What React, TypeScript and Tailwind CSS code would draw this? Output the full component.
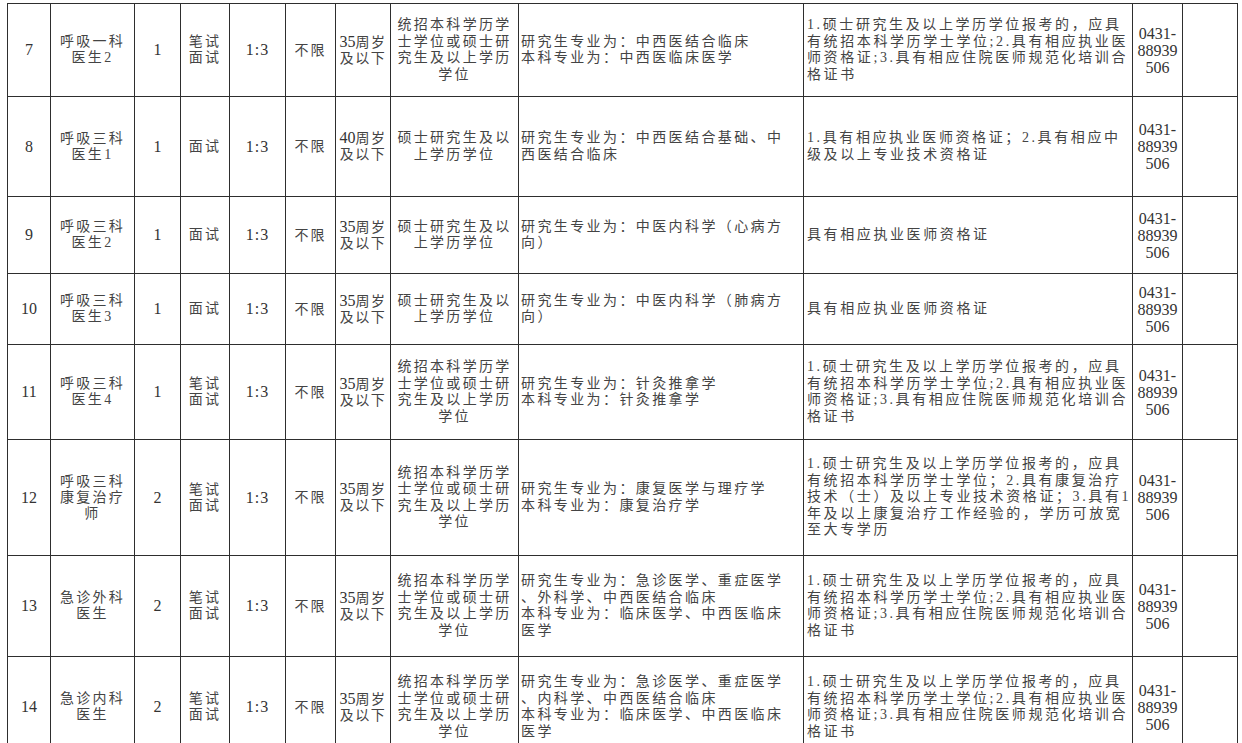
import React from 'react';

type Row = {
  no: string;
  post: string[];
  count: string;
  exam: string[];
  age: string[];
  edu: string[];
  major: string[];
  cond: string[];
  h: string;
};

const eduA = ['统招本科学历学', '士学位或硕士研', '究生及以上学历', '学位'];
const eduB = ['硕士研究生及以', '上学历学位'];
const condA = [
  '1.硕士研究生及以上学历学位报考的，应具',
  '有统招本科学历学士学位;2.具有相应执业医',
  '师资格证;3.具有相应住院医师规范化培训合',
  '格证书',
];

const rows: Row[] = [
  { no: '7', post: ['呼吸一科', '医生2'], count: '1', exam: ['笔试', '面试'], age: ['35周岁', '及以下'], edu: eduA, major: ['研究生专业为：中西医结合临床', '本科专业为：中西医临床医学'], cond: condA, h: 'h-[93px]' },
  { no: '8', post: ['呼吸三科', '医生1'], count: '1', exam: ['面试'], age: ['40周岁', '及以下'], edu: eduB, major: ['研究生专业为：中西医结合基础、中', '西医结合临床'], cond: ['1.具有相应执业医师资格证；2.具有相应中', '级及以上专业技术资格证'], h: 'h-[100px]' },
  { no: '9', post: ['呼吸三科', '医生2'], count: '1', exam: ['面试'], age: ['35周岁', '及以下'], edu: eduB, major: ['研究生专业为：中医内科学（心病方', '向）'], cond: ['具有相应执业医师资格证'], h: 'h-[77px]' },
  { no: '10', post: ['呼吸三科', '医生3'], count: '1', exam: ['面试'], age: ['35周岁', '及以下'], edu: eduB, major: ['研究生专业为：中医内科学（肺病方', '向）'], cond: ['具有相应执业医师资格证'], h: 'h-[71px]' },
  { no: '11', post: ['呼吸三科', '医生4'], count: '1', exam: ['笔试', '面试'], age: ['35周岁', '及以下'], edu: eduA, major: ['研究生专业为：针灸推拿学', '本科专业为：针灸推拿学'], cond: condA, h: 'h-[95px]' },
  { no: '12', post: ['呼吸三科', '康复治疗', '师'], count: '2', exam: ['笔试', '面试'], age: ['35周岁', '及以下'], edu: eduA, major: ['研究生专业为：康复医学与理疗学', '本科专业为：康复治疗学'], cond: ['1.硕士研究生及以上学历学位报考的，应具', '有统招本科学历学士学位；2.具有康复治疗', '技术（士）及以上专业技术资格证；3.具有1', '年及以上康复治疗工作经验的，学历可放宽', '至大专学历'], h: 'h-[116px]' },
  { no: '13', post: ['急诊外科', '医生'], count: '2', exam: ['笔试', '面试'], age: ['35周岁', '及以下'], edu: eduA, major: ['研究生专业为：急诊医学、重症医学', '、外科学、中西医结合临床', '本科专业为：临床医学、中西医临床', '医学'], cond: condA, h: 'h-[101px]' },
  { no: '14', post: ['急诊内科', '医生'], count: '2', exam: ['笔试', '面试'], age: ['35周岁', '及以下'], edu: eduA, major: ['研究生专业为：急诊医学、重症医学', '、内科学、中西医结合临床', '本科专业为：临床医学、中西医临床', '医学'], cond: condA, h: 'h-[101px]' },
];

function Lines({ lines }: { lines: string[] }) {
  return (
    <>
      {lines.map((l, i) => (
        <div key={i} className="whitespace-nowrap">{l}</div>
      ))}
    </>
  );
}

const td = 'border border-[#2e2e2e] align-middle p-0';

export default function App() {
  return (
    <div className="w-[1242px] h-[743px] overflow-hidden bg-white pt-[3px] pl-[7px] font-['Liberation_Serif','Noto_Sans_CJK_SC',serif] text-[#444444]">
      <table className="table-fixed border-collapse w-[1230px] border-t border-t-[#bdbdbd]">
        <colgroup>
          <col className="w-[43px]" />
          <col className="w-[84px]" />
          <col className="w-[46px]" />
          <col className="w-[49px]" />
          <col className="w-[56px]" />
          <col className="w-[50px]" />
          <col className="w-[55px]" />
          <col className="w-[128px]" />
          <col className="w-[285px]" />
          <col className="w-[329px]" />
          <col className="w-[50px]" />
          <col className="w-[55px]" />
        </colgroup>
        <tbody>
          {rows.map(r => (
            <tr key={r.no} className={r.h}>
              <td className={`${td} text-center text-[16px] text-[#333333]`}>{r.no}</td>
              <td className={`${td} text-center text-[14px] leading-[16px] tracking-[2.3px]`}>
                <Lines lines={r.post} />
              </td>
              <td className={`${td} text-center text-[16px] text-[#333333]`}>{r.count}</td>
              <td className={`${td} text-center text-[14px] leading-[16px] tracking-[2.3px]`}>
                <Lines lines={r.exam} />
              </td>
              <td className={`${td} text-center text-[16px] tracking-[1px] text-[#333333]`}>1:3</td>
              <td className={`${td} text-center text-[14px] tracking-[2px]`}>不限</td>
              <td className={`${td} text-center text-[14px] leading-[16px] tracking-[1.5px]`}>
                <div className="whitespace-nowrap">
                  <span className="text-[16px] tracking-normal text-[#333333]">{r.age[0].slice(0, 2)}</span>
                  {r.age[0].slice(2)}
                </div>
                <div className="whitespace-nowrap">{r.age[1]}</div>
              </td>
              <td className={`${td} text-center text-[14px] leading-[16.5px] tracking-[2.3px]`}>
                <Lines lines={r.edu} />
              </td>
              <td className={`${td} pl-[2px] text-left text-[14px] leading-[16.5px] tracking-[2.4px]`}>
                <Lines lines={r.major} />
              </td>
              <td className={`${td} pl-[3px] text-left text-[14px] leading-[16.5px] tracking-[2.6px]`}>
                <Lines lines={r.cond} />
              </td>
              <td className={`${td} text-center text-[16px] leading-[17px] text-[#333333]`}>
                <div>0431-</div>
                <div>88939</div>
                <div>506</div>
              </td>
              <td className={td}></td>
            </tr>
          ))}
        </tbody>
      </table>
    </div>
  );
}
